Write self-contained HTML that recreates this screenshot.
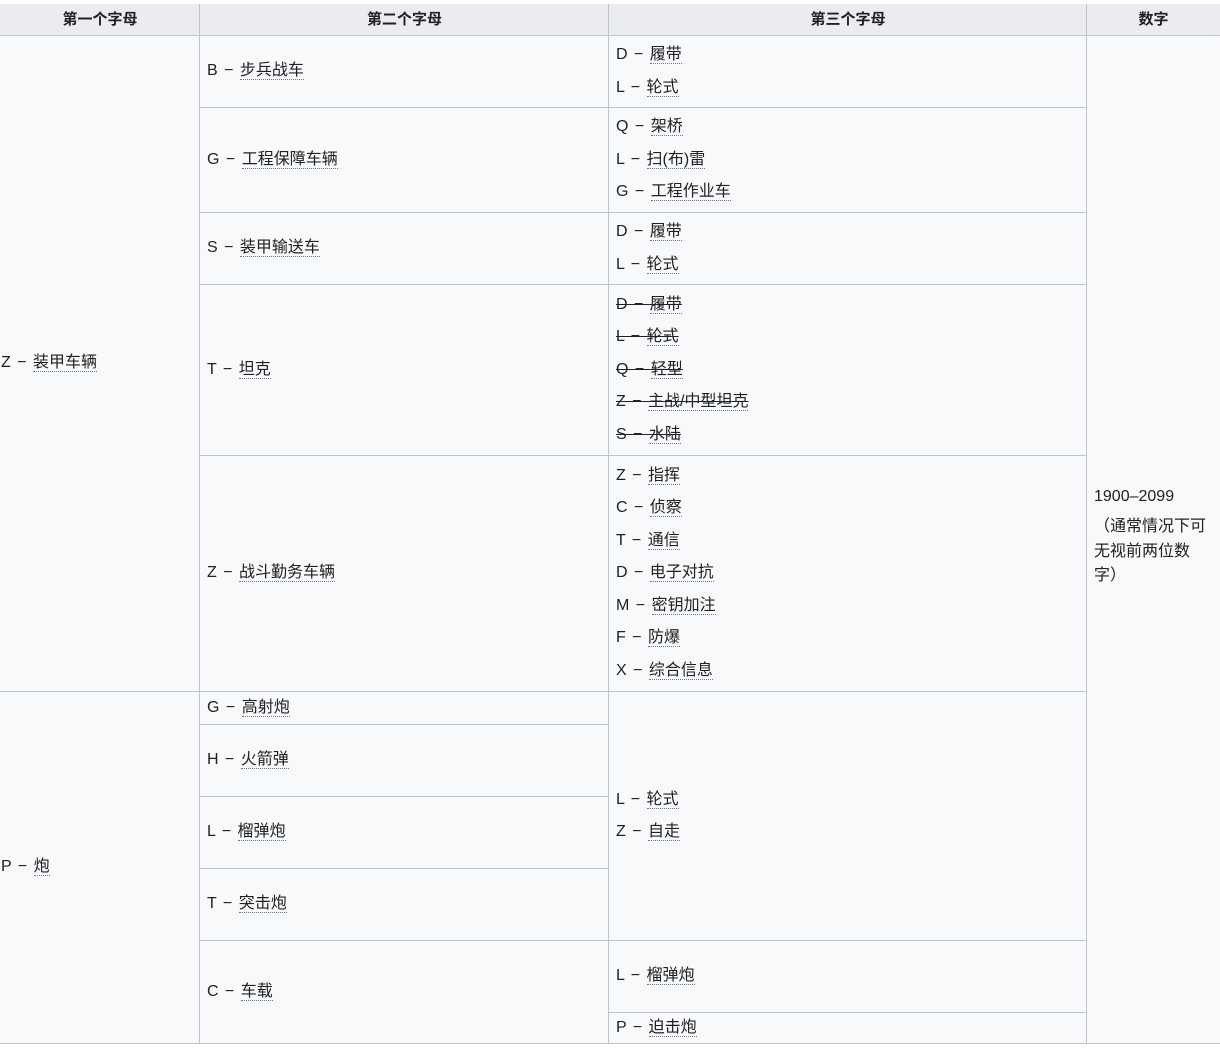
<!DOCTYPE html>
<html><head><meta charset="utf-8"><style>
body{margin:0;width:1220px;height:1050px;background:#fff;position:relative;overflow:hidden;font-family:"Liberation Sans","Noto Sans CJK SC",sans-serif;font-size:16px;color:#202122}
.c{position:absolute;box-sizing:border-box;background:#f8f9fa;border-left:1px solid #c0c4c9;border-top:1px solid #c0c4c9;border-bottom:1px solid #c0c4c9;display:flex;flex-direction:column;justify-content:center;padding-left:7px;line-height:32.5px;word-spacing:2px}
.h{background:#eaecf0;font-weight:bold;align-items:center;padding:0;line-height:30px;font-size:15px;border-top:0}
u{text-decoration:none;border-bottom:1px dotted #72777d;line-height:1.2}
.s{text-decoration:line-through}
</style></head><body>
<div class="c h" style="left:0;top:4px;width:200px;height:32px;border-left:0">第一个字母</div>
<div class="c h" style="left:199px;top:4px;width:410px;height:32px">第二个字母</div>
<div class="c h" style="left:608px;top:4px;width:479px;height:32px">第三个字母</div>
<div class="c h" style="left:1086px;top:4px;width:134px;height:32px">数字</div>

<div class="c" style="left:0;top:35px;width:200px;height:657px;padding-left:1px;border-left:0"><div>Z − <u>装甲车辆</u></div></div>
<div class="c" style="left:0;top:691px;width:200px;height:353px;padding-left:1px;border-left:0"><div>P − <u>炮</u></div></div>

<div class="c" style="left:199px;top:35px;width:410px;height:73px"><div>B − <u>步兵战车</u></div></div>
<div class="c" style="left:199px;top:107px;width:410px;height:106px"><div>G − <u>工程保障车辆</u></div></div>
<div class="c" style="left:199px;top:212px;width:410px;height:73px"><div>S − <u>装甲输送车</u></div></div>
<div class="c" style="left:199px;top:284px;width:410px;height:172px"><div>T − <u>坦克</u></div></div>
<div class="c" style="left:199px;top:455px;width:410px;height:237px"><div>Z − <u>战斗勤务车辆</u></div></div>
<div class="c" style="left:199px;top:691px;width:410px;height:34px"><div>G − <u>高射炮</u></div></div>
<div class="c" style="left:199px;top:724px;width:410px;height:73px"><div>H − <u>火箭弹</u></div></div>
<div class="c" style="left:199px;top:796px;width:410px;height:73px"><div>L − <u>榴弹炮</u></div></div>
<div class="c" style="left:199px;top:868px;width:410px;height:73px"><div>T − <u>突击炮</u></div></div>
<div class="c" style="left:199px;top:940px;width:410px;height:104px"><div>C − <u>车载</u></div></div>

<div class="c" style="left:608px;top:35px;width:479px;height:73px"><div>D − <u>履带</u></div><div>L − <u>轮式</u></div></div>
<div class="c" style="left:608px;top:107px;width:479px;height:106px"><div>Q − <u>架桥</u></div><div>L − <u>扫(布)雷</u></div><div>G − <u>工程作业车</u></div></div>
<div class="c" style="left:608px;top:212px;width:479px;height:73px"><div>D − <u>履带</u></div><div>L − <u>轮式</u></div></div>
<div class="c" style="left:608px;top:284px;width:479px;height:172px"><div class="s">D − <u>履带</u></div><div class="s">L − <u>轮式</u></div><div class="s">Q − <u>轻型</u></div><div class="s">Z − <u>主战/中型坦克</u></div><div class="s">S − <u>水陆</u></div></div>
<div class="c" style="left:608px;top:455px;width:479px;height:237px"><div>Z − <u>指挥</u></div><div>C − <u>侦察</u></div><div>T − <u>通信</u></div><div>D − <u>电子对抗</u></div><div>M − <u>密钥加注</u></div><div>F − <u>防爆</u></div><div>X − <u>综合信息</u></div></div>
<div class="c" style="left:608px;top:691px;width:479px;height:250px"><div>L − <u>轮式</u></div><div>Z − <u>自走</u></div></div>
<div class="c" style="left:608px;top:940px;width:479px;height:73px"><div>L − <u>榴弹炮</u></div></div>
<div class="c" style="left:608px;top:1012px;width:479px;height:32px"><div>P − <u>迫击炮</u></div></div>

<div class="c" style="left:1086px;top:35px;width:134px;height:1009px;line-height:24.5px;padding-right:14px;word-spacing:0"><div style="margin-bottom:6px;margin-top:-6px">1900–2099</div><div>（通常情况下可无视前两位数字）</div></div>
</body></html>
